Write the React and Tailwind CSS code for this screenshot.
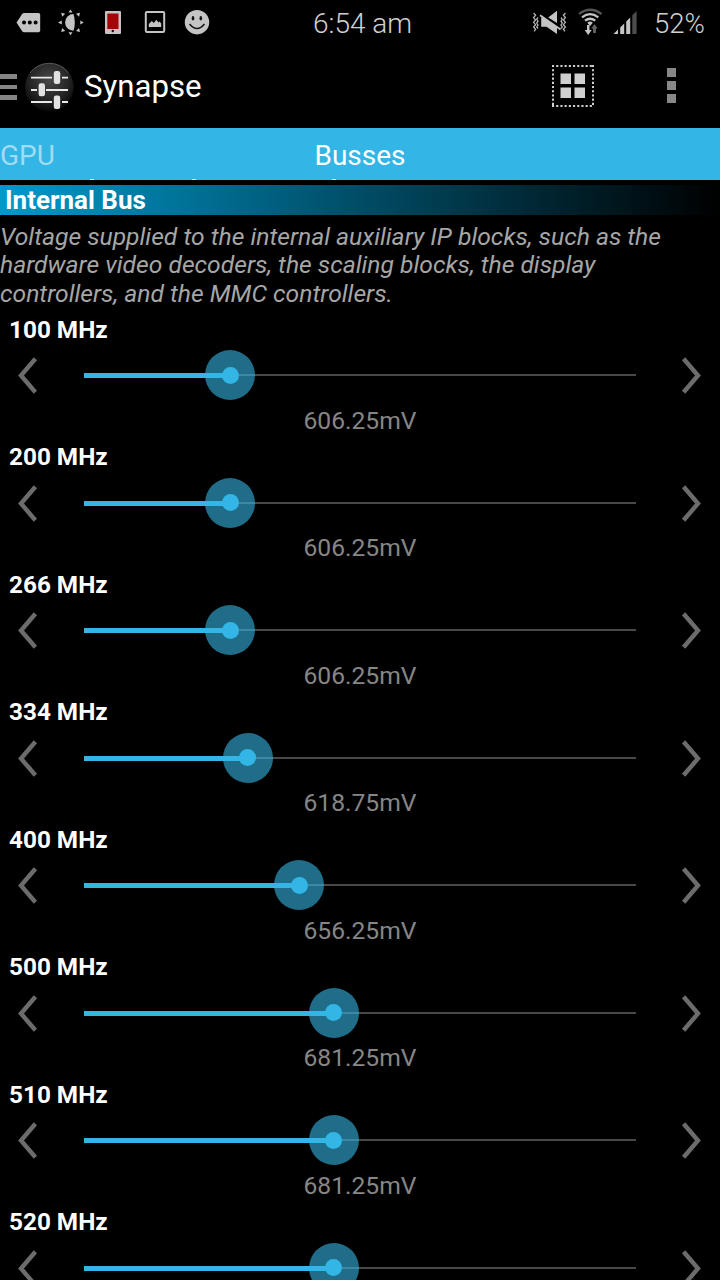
import React from "react";

const rows = [
  { label: "100 MHz", value: "606.25mV", x: 146 },
  { label: "200 MHz", value: "606.25mV", x: 146 },
  { label: "266 MHz", value: "606.25mV", x: 146 },
  { label: "334 MHz", value: "618.75mV", x: 163.5 },
  { label: "400 MHz", value: "656.25mV", x: 215 },
  { label: "500 MHz", value: "681.25mV", x: 249.5 },
  { label: "510 MHz", value: "681.25mV", x: 249.5 },
  { label: "520 MHz", x: 249.5 },
];

function StatusLeft() {
  return (
    <svg width="220" height="46" viewBox="0 0 220 46" fill="#c4c4c4" className="shrink-0">
      <path d="M16.5 22.5 22 14.2Q22.8 13 24.2 13H38.5Q40.2 13 40.2 14.7V30.5Q40.2 32.2 38.5 32.2H24.2Q22.8 32.2 22 31Z" />
      <g fill="#000">
        <circle cx="24" cy="22.5" r="2" />
        <circle cx="29.8" cy="22.5" r="2" />
        <circle cx="35.6" cy="22.5" r="2" />
      </g>
      <path d="M73.5 14A8.4 8.4 0 1 0 73.5 30.8Q74.8 26.5 74.8 22.4T73.5 14Z" />
      <path d="M70.5 9.6l2 3h-4zM70.5 35.2l2-3h-4zM58 22.4l3.8-2v4zM83.7 22.4l-3.4-2v4zM61.2 12.8l4 1-3 3zM61.2 32l1-4 3 3zM80 12.8l-4 1 3 3zM80 32l-1-4-3 3z" />
      <rect x="105" y="11" width="16" height="23" rx="1" />
      <rect x="107.3" y="13.5" width="11.2" height="15.5" fill="#a30508" />
      <circle cx="112.8" cy="31" r="1.2" fill="#111" />
      <rect x="145.8" y="12" width="18.4" height="20" rx="1.2" fill="none" stroke="#c4c4c4" strokeWidth="2" />
      <path d="M148.8 27v-3l3-3 2 2 2.6-3.2 2 2.6 1.2-1 1.6 2.2V27z" />
      <circle cx="197" cy="22.2" r="12.2" />
      <ellipse cx="193" cy="18.2" rx="1.3" ry="2.2" fill="#111" />
      <ellipse cx="200.8" cy="18.2" rx="1.3" ry="2.2" fill="#111" />
      <path d="M189.5 24Q197 33 204.5 24" fill="none" stroke="#111" strokeWidth="1.4" />
    </svg>
  );
}

function StatusRight() {
  return (
    <svg width="115" height="46" viewBox="525 0 115 46" fill="#c4c4c4" className="shrink-0">
      <g fill="none" stroke="#b4b4b4" strokeWidth="1.3">
        <path d="M533.6 13l2 2.3-2 2.3 2 2.4-2 2.3 2 2.4-2 2.3 2 2.3-1.5 2" />
        <path d="M538 17.5l-1.3 1.8 1.3 1.9-1.3 1.9 1.3 1.9-1.3 1.9 1.3 1.6" />
        <path d="M565.4 13l-2 2.3 2 2.3-2 2.4 2 2.3-2 2.4 2 2.3-2 2.3 1.5 2" />
        <path d="M561 17.5l1.3 1.8-1.3 1.9 1.3 1.9-1.3 1.9 1.3 1.9-1.3 1.6" />
      </g>
      <path d="M541.2 17.6V26.8H546.5L557 34V26.6L543.4 17.6Z" />
      <path d="M548.2 17.4 557 10.8V22.9Z" />
      <path d="M540 15.2 560.6 29.4" stroke="#c4c4c4" strokeWidth="1.8" />
      <g fill="none" strokeWidth="2.2">
        <path d="M579 14Q590 5.5 601.5 14" stroke="#555" />
        <path d="M582 17.4Q590 11 598.3 17.4" stroke="#c4c4c4" />
        <path d="M585 20.7Q590 16.8 595.3 20.7" stroke="#c4c4c4" />
      </g>
      <path d="M587.3 22.8Q590 20.4 592.8 22.8L590 26z" />
      <path d="M587 25h2.5v5h2.2l-3.5 5-3.6-5h2.4z" />
      <path d="M594.5 24.2l3.2 4.2h-1.8v4.5h-2.8v-4.5h-1.8z" fill="#666" />
      <path d="M613.5 34l4.5-4.5V34zM620.2 27.6l4-4V34h-4zM626.2 21.4l4-4V34h-4z" />
      <path d="M632.3 15.3l4.3-4.3V34h-4.3z" fill="#4c4c4c" />
    </svg>
  );
}

function AppIcon() {
  return (
    <svg width="50" height="50" viewBox="24 59 50 50" className="ml-[7px] shrink-0">
      <defs>
        <radialGradient id="disc" cx="0.5" cy="0.35" r="0.65">
          <stop offset="0" stopColor="#484848" />
          <stop offset="0.6" stopColor="#262626" />
          <stop offset="1" stopColor="#070707" />
        </radialGradient>
      </defs>
      <circle cx="49.3" cy="84.3" r="24.3" fill="url(#disc)" />
      <path d="M30 70A24 24 0 0 1 68.6 70" fill="none" stroke="#666" strokeWidth="0.8" />
      <path d="M31 74.7h21M62 74.7h6M31 87h6M46 87h22M31 99h21M62 99h6" stroke="#e8e8e8" strokeWidth="1.8" />
      <g fill="#e2e2e2">
        <rect x="53.8" y="68" width="6.4" height="13" rx="2.2" />
        <rect x="38.6" y="80.3" width="6.4" height="13" rx="2.2" />
        <rect x="53.8" y="92.5" width="6.4" height="13.5" rx="2.2" />
      </g>
    </svg>
  );
}

function Chevron({ right }) {
  return (
    <svg width="24" height="40" viewBox="0 0 24 40" className="shrink-0">
      <path
        d={right ? "M3.6 3.7 18 20.5 3.6 37.3" : "M20.4 3.7 6 20.5 20.4 37.3"}
        fill="none"
        stroke="#6c6c6c"
        strokeWidth="4.4"
      />
    </svg>
  );
}

function Slider({ label, value, x }) {
  return (
    <div className="h-[127.5px] shrink-0">
      <div className="h-[28px] pl-[9px] text-[24.3px] leading-[28px] font-bold text-white">{label}</div>
      <div className="flex h-[63px] items-center pr-[16px] pl-[15px]">
        <Chevron />
        <div className="relative mr-[44px] ml-[45px] flex h-[50px] flex-1 items-center">
          <div className="h-[2px] w-full bg-[#484848]" />
          <div className="absolute top-[23px] left-0 h-[5px] bg-[#33b5e5]" style={{ width: x }} />
          <div
            className="absolute top-0 flex size-[50px] items-center justify-center rounded-full bg-[#33b5e5]/60"
            style={{ left: x - 25 }}
          >
            <div className="size-[17px] rounded-full bg-[#33b5e5]" />
          </div>
        </div>
        <Chevron right />
      </div>
      {value && <div className="h-[28px] text-center text-[24.65px] leading-[28px] text-[#868686]">{value}</div>}
    </div>
  );
}

export default function App() {
  return (
    <div className="flex h-[1280px] w-[720px] flex-col overflow-hidden bg-black font-['Roboto',sans-serif]">
      <div className="flex h-[46px] shrink-0 items-center">
        <StatusLeft />
        <span className="w-[305px] pt-[2px] pl-[93px] text-[28px] font-light whitespace-nowrap text-[#d0d0d0]">6:54 am</span>
        <StatusRight />
        <span className="pt-[2px] pl-[14px] text-[27.5px] font-light text-[#d0d0d0]">52%</span>
      </div>

      <div className="flex h-[82px] shrink-0 items-center">
        <div className="flex w-[17px] flex-col gap-[6px]">
          <div className="h-[4.5px] bg-[#858585]" />
          <div className="h-[4.5px] bg-[#858585]" />
          <div className="h-[4.5px] bg-[#858585]" />
        </div>
        <AppIcon />
        <h1 className="ml-[10px] w-[468px] text-[31.2px] text-white">Synapse</h1>
        <svg width="42" height="42" viewBox="0 0 42 42" fill="#d0d0d0" className="mb-[2px] shrink-0">
          <path d="M0 1H42M0 41H42M1 0V42M41 0V42" stroke="#d0d0d0" strokeWidth="2" strokeDasharray="2.1 2.1" />
          <path d="M8.5 8.5h10.5v10.5H8.5zM22.5 8.5H33v10.5H22.5zM8.5 22.5h10.5V33H8.5zM22.5 22.5H33V33H22.5z" />
        </svg>
        <div className="mb-[3px] ml-[73px] flex flex-col gap-[4px]">
          <div className="size-[9px] bg-[#888]" />
          <div className="size-[9px] bg-[#888]" />
          <div className="size-[9px] bg-[#888]" />
        </div>
      </div>

      <div className="relative grid h-[52px] shrink-0 grid-cols-3 items-center bg-[#33b5e5] pt-[3px] text-[28px]">
        <span className="text-[#a0dcf3]">GPU</span>
        <span className="text-center text-white">Busses</span>
        <div className="absolute bottom-0 left-[90px] h-px w-[4px] bg-white/80" />
        <div className="absolute bottom-0 left-[192px] h-px w-[4px] bg-white/80" />
        <div className="absolute bottom-0 left-[332px] h-px w-[4px] bg-white/80" />
      </div>

      <h2 className="mt-[5px] h-[30px] shrink-0 bg-linear-to-r/srgb from-[#0099cc] to-black pl-[5px] text-[26px] leading-[30px] font-bold text-white">
        Internal Bus
      </h2>
      <p className="mt-[8px] h-[92.5px] shrink-0 text-[24.67px] leading-[28.3px] whitespace-nowrap text-[#a6a6a6] italic">
        Voltage supplied to the internal auxiliary IP blocks, such as the
        <br />
        hardware video decoders, the scaling blocks, the display
        <br />
        controllers, and the MMC controllers.
      </p>

      {rows.map((row) => (
        <Slider key={row.label} {...row} />
      ))}
    </div>
  );
}
